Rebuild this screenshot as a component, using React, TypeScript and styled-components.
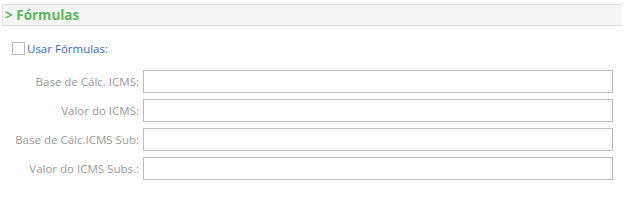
import React from "react";
import styled, { createGlobalStyle } from "styled-components";

const GlobalStyle = createGlobalStyle`
  html, body {
    margin: 0;
    padding: 0;
    background: #ffffff;
    font-family: "Open Sans", "DejaVu Sans", sans-serif;
  }
`;

const Page = styled.div`
  width: 625px;
  padding: 4px 3px 0 2px;
  box-sizing: border-box;
`;

const SectionHeader = styled.div`
  height: 22px;
  box-sizing: border-box;
  background: #f5f5f5;
  border: 1px solid #dddddd;
  border-right: none;
  display: flex;
  align-items: center;
  padding-left: 2px;
  font-size: 13.5px;
  font-weight: 700;
  color: #5cb85c;
`;

const CheckRow = styled.label`
  display: flex;
  align-items: center;
  gap: 2px;
  margin: 15px 0 0 10px;
  font-size: 11.5px;
  color: #3a6ec8;
`;

const CheckBox = styled.span`
  width: 11px;
  height: 11px;
  border: 1px solid #bbbbbb;
  background: #ffffff;
`;

const Form = styled.div`
  display: grid;
  grid-template-columns: 137px 470px;
  column-gap: 4px;
  row-gap: 6px;
  margin-top: 14px;
  align-items: center;
`;

const Label = styled.span`
  text-align: right;
  font-size: 11.5px;
  color: #999999;
  white-space: nowrap;
`;

const Input = styled.input`
  height: 23px;
  box-sizing: border-box;
  border: 1px solid #bdbdbd;
  margin: 0;
  padding: 0 4px;
  background: #ffffff;
  outline: none;
`;

const fields = [
  "Base de Cálc. ICMS:",
  "Valor do ICMS:",
  "Base de Cálc.ICMS Sub:",
  "Valor do ICMS Subs.:",
];

export default function App() {
  return (
    <Page>
      <GlobalStyle />
      <SectionHeader>&gt; Fórmulas</SectionHeader>
      <CheckRow>
        <CheckBox />
        Usar Fórmulas:
      </CheckRow>
      <Form>
        {fields.map((f) => (
          <React.Fragment key={f}>
            <Label>{f}</Label>
            <Input type="text" />
          </React.Fragment>
        ))}
      </Form>
    </Page>
  );
}
